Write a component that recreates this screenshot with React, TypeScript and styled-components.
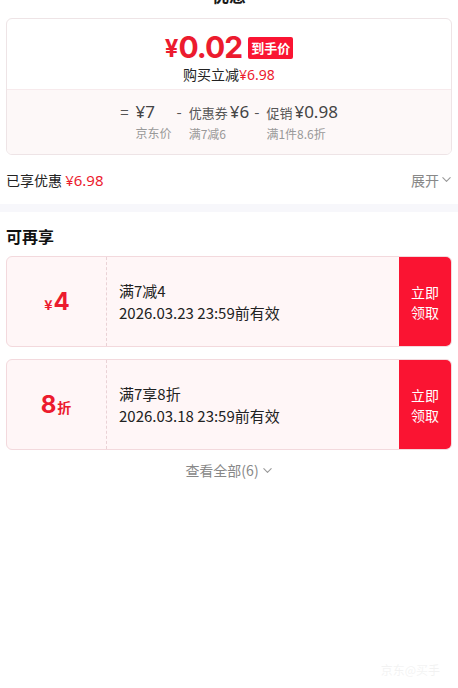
import React from 'react';
import styled, { createGlobalStyle } from 'styled-components';

const GlobalStyle = createGlobalStyle`
  html, body {
    margin: 0;
    padding: 0;
    background: #fff;
    font-family: "Noto Sans CJK SC", "Noto Sans", sans-serif;
    color: #1a1a1a;
  }
`;

const RED = '#ec1b2e';
const BTN = '#fa1432';

interface Coupon {
  kind: 'money' | 'discount';
  value: string;
  title: string;
  expire: string;
}

const coupons: Coupon[] = [
  { kind: 'money', value: '4', title: '满7减4', expire: '2026.03.23 23:59前有效' },
  { kind: 'discount', value: '8', title: '满7享8折', expire: '2026.03.18 23:59前有效' },
];

const Chevron = () => (
  <svg width="11" height="11" viewBox="0 0 12 12" fill="none">
    <path d="M2 4l4 4 4-4" stroke="#999" strokeWidth="1.2" strokeLinecap="round" strokeLinejoin="round" />
  </svg>
);

const App = () => {
  return (
    <Page>
      <GlobalStyle />
      <Title>优惠</Title>

      <PriceCard>
        <PriceTop>
          <PriceLine>
            <Yen>¥</Yen>
            <Big>0.02</Big>
            <Badge>到手价</Badge>
          </PriceLine>
          <Reduce>
            购买立减<Red>¥6.98</Red>
          </Reduce>
        </PriceTop>
        <Formula>
          <Term>
            <Op>=</Op>
            <Stack>
              <Amount>¥7</Amount>
              <Sub>京东价</Sub>
            </Stack>
          </Term>
          <Term>
            <Op>-</Op>
            <Stack>
              <Amount>
                <Small>优惠券</Small>¥6
              </Amount>
              <Sub>满7减6</Sub>
            </Stack>
          </Term>
          <Term>
            <Op>-</Op>
            <Stack>
              <Amount>
                <Small>促销</Small>¥0.98
              </Amount>
              <Sub>满1件8.6折</Sub>
            </Stack>
          </Term>
        </Formula>
      </PriceCard>

      <Enjoyed>
        <span>
          已享优惠 <Red>¥6.98</Red>
        </span>
        <Toggle>
          展开 <Chevron />
        </Toggle>
      </Enjoyed>

      <Band />

      <SectionTitle>可再享</SectionTitle>

      <List>
        {coupons.map((c) => (
          <CouponCard key={c.title}>
            <Face>
              {c.kind === 'money' ? (
                <>
                  <FaceUnit>¥</FaceUnit>
                  <FaceNum>{c.value}</FaceNum>
                </>
              ) : (
                <>
                  <FaceNum>{c.value}</FaceNum>
                  <FaceUnit>折</FaceUnit>
                </>
              )}
            </Face>
            <Info>
              <InfoTitle>{c.title}</InfoTitle>
              <InfoDate>{c.expire}</InfoDate>
            </Info>
            <Grab>
              立即
              <br />
              领取
            </Grab>
          </CouponCard>
        ))}
      </List>

      <More>
        查看全部(6) <Chevron />
      </More>

      <Watermark>京东@买手</Watermark>
    </Page>
  );
};

export default App;

const Page = styled.div`
  width: 458px;
  height: 688px;
  overflow: hidden;
  position: relative;
  box-sizing: border-box;
  padding: 0 6px;
`;

const Title = styled.div`
  margin-top: -15px;
  height: 20px;
  line-height: 20px;
  text-align: center;
  font-size: 17px;
  font-weight: 700;
`;

const PriceCard = styled.div`
  margin-top: 13px;
  border: 1px solid #eee4e6;
  border-radius: 6px;
  overflow: hidden;
`;

const PriceTop = styled.div`
  height: 71px;
  display: flex;
  flex-direction: column;
  align-items: center;
  padding-top: 12px;
  box-sizing: border-box;
  border-bottom: 1px solid #f7eaec;
`;

const PriceLine = styled.div`
  display: flex;
  align-items: center;
  color: ${RED};
  height: 32px;
`;

const Yen = styled.span`
  font-family: Inter, "Noto Sans", sans-serif;
  font-size: 24px;
  font-weight: 700;
  margin-top: 3px;
`;

const Big = styled.span`
  font-family: Inter, "Noto Sans", sans-serif;
  font-size: 30px;
  font-weight: 700;
  letter-spacing: -1px;
  margin-right: 6px;
`;

const Badge = styled.span`
  background: ${BTN};
  color: #fff;
  font-size: 13px;
  font-weight: 700;
  height: 22px;
  line-height: 22px;
  padding: 0 3px;
  border-radius: 2px;
  margin-top: 2px;
`;

const Reduce = styled.div`
  font-size: 14px;
  line-height: 18px;
  margin-top: 2px;
  color: #222;
`;

const Red = styled.span`
  color: ${RED};
  font-family: "Noto Sans", "Noto Sans CJK SC", sans-serif;
`;

const Formula = styled.div`
  background: #fdf8f8;
  height: 64px;
  display: flex;
  justify-content: center;
  align-items: flex-start;
  padding-top: 11px;
  box-sizing: border-box;
  gap: 5px;
`;

const Term = styled.div`
  display: flex;
  align-items: flex-start;
`;

const Op = styled.span`
  font-size: 15px;
  line-height: 22px;
  color: #555;
  margin-right: 7px;
`;

const Stack = styled.div`
  display: flex;
  flex-direction: column;
`;

const Amount = styled.span`
  font-family: "Noto Sans", "Noto Sans CJK SC", sans-serif;
  font-size: 17px;
  line-height: 22px;
  color: #444;
  white-space: nowrap;
`;

const Small = styled.span`
  font-family: "Noto Sans CJK SC", sans-serif;
  font-size: 13px;
  color: #555;
  margin-right: 2px;
`;

const Sub = styled.span`
  font-size: 12px;
  line-height: 16px;
  margin-top: 2px;
  color: #999;
  white-space: nowrap;
`;

const Enjoyed = styled.div`
  height: 49px;
  display: flex;
  align-items: center;
  justify-content: space-between;
  font-size: 14px;
  color: #222;
  ${Red} {
    font-size: 15px;
  }
`;

const Toggle = styled.span`
  display: flex;
  align-items: center;
  gap: 2px;
  color: #888;
  font-size: 14px;
`;

const Band = styled.div`
  margin: 0 -6px;
  height: 8px;
  background: #f7f7fb;
`;

const SectionTitle = styled.div`
  height: 44px;
  line-height: 48px;
  font-size: 16px;
  font-weight: 700;
  color: #111;
`;

const List = styled.div`
  display: flex;
  flex-direction: column;
  gap: 12px;
`;

const CouponCard = styled.div`
  height: 91px;
  display: flex;
  background: #fff6f7;
  border: 1px solid #f3d9dd;
  border-radius: 6px;
  overflow: hidden;
  box-sizing: border-box;
`;

const Face = styled.div`
  width: 100px;
  border-right: 1px dashed #ead2d6;
  display: flex;
  align-items: baseline;
  justify-content: center;
  padding-top: 30px;
  box-sizing: border-box;
  color: ${RED};
`;

const FaceNum = styled.span`
  font-family: Inter, "Noto Sans", sans-serif;
  font-size: 24px;
  font-weight: 700;
`;

const FaceUnit = styled.span`
  font-size: 14px;
  font-weight: 700;
  margin: 0 1px;
`;

const Info = styled.div`
  flex: 1;
  display: flex;
  flex-direction: column;
  justify-content: center;
  padding-left: 12px;
  color: #222;
  font-size: 15px;
  line-height: 22px;
`;

const InfoTitle = styled.div``;

const InfoDate = styled.div``;

const Grab = styled.div`
  width: 52px;
  background: ${BTN};
  color: #fff;
  font-size: 14px;
  line-height: 20px;
  display: flex;
  align-items: center;
  justify-content: center;
  text-align: center;
`;

const More = styled.div`
  margin-top: 10px;
  display: flex;
  align-items: center;
  justify-content: center;
  gap: 3px;
  font-size: 14px;
  color: #888;
`;

const Watermark = styled.div`
  position: absolute;
  right: 18px;
  bottom: 10px;
  font-size: 12px;
  color: rgba(220, 220, 220, 0.35);
`;
